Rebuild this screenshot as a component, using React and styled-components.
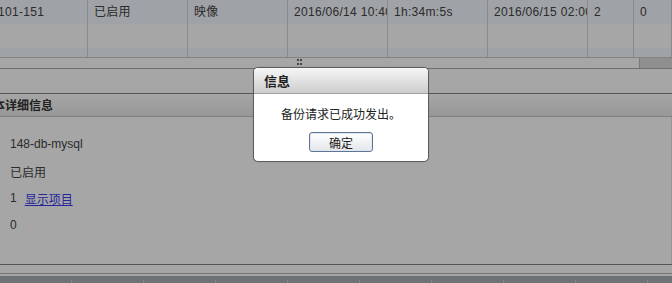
import React from 'react';
import styled, { createGlobalStyle } from 'styled-components';

const GlobalStyle = createGlobalStyle`
    html, body {
        margin: 0;
        padding: 0;
        background: #ffffff;
    }
    body {
        font-family: "Liberation Sans", Arial, "Noto Sans CJK SC", sans-serif;
        font-size: 12px;
        color: #444;
    }
`;

const Page = styled.div`
    position: relative;
    width: 672px;
    height: 283px;
    overflow: hidden;
    display: flex;
    flex-direction: column;
    background: #fff;
`;

// backup job list, scrolled a little to the right
const Grid = styled.div`
    height: 57px;
    overflow: hidden;
    border-bottom: 1px solid #cacaca;
`;

const Row = styled.div`
    display: grid;
    grid-template-columns: 88px 100px 100px 100px 100px 100px 46px 38px;
    height: 24px;
    background: ${p => (p.$alt ? '#ffffff' : '#f5f9ff')};
`;

const Cell = styled.div`
    border-right: 1px solid #d4d4d4;
    padding-left: ${p => (p.$first ? '0' : '6px')};
    text-indent: ${p => (p.$first ? '-2px' : '0')};
    line-height: 24px;
    letter-spacing: 0.3px;
    white-space: nowrap;
    overflow: hidden;
    color: #444;
    font-family: "Liberation Sans", Arial, "Noto Sans CJK SC", sans-serif;
`;

const HScroll = styled.div`
    position: relative;
    height: 10px;
    display: flex;
    background: #dcdcdc;
    border-bottom: 1px solid #aaaaaa;
`;

const Thumb = styled.div`
    width: 639px;
    background: #ffffff;
    border-right: 1px solid #b8b8b8;
`;

const SplitHandle = styled.svg`
    position: absolute;
    left: 297px;
    top: 1px;
`;

const Toolbar = styled.div`
    height: 24px;
    background: #fff;
`;

const DetailHeader = styled.div`
    height: 22px;
    line-height: 22px;
    border-top: 1px solid #838383;
    border-bottom: 1px solid #c4c4c4;
    background: linear-gradient(#ffffff, #e9e9e9);
    font-weight: bold;
    font-size: 12px;
    text-indent: -7px;
    color: #333;
    font-family: "Noto Sans CJK SC", sans-serif;
    white-space: nowrap;
    overflow: hidden;
`;

const DetailBody = styled.div`
    flex: 1;
    padding: 14px 10px 0;
    border-right: 1px solid #e6e6e6;
`;

const DetailLine = styled.div`
    height: 27px;
    line-height: 27px;
    display: flex;
    gap: 8px;
    color: #444;
    font-family: ${p => (p.$cjk ? '"Noto Sans CJK SC", sans-serif' : '"Liberation Sans", Arial, "Noto Sans CJK SC", sans-serif')};
`;

const Link = styled.a`
    color: #3a3af0;
    text-decoration: underline;
    font-family: "Noto Sans CJK SC", sans-serif;
`;

const Footer = styled.div`
    height: 19px;
    display: flex;
    flex-direction: column;
`;

const FooterBar = styled.div`
    height: 8px;
    border-top: 1px solid #838383;
    border-bottom: 1px solid #b5b5b5;
    background: #fff;
`;

const FooterGap = styled.div`
    height: 2px;
    background: #fff;
`;

const HeaderStrip = styled.div`
    flex: 1;
    background: linear-gradient(90deg, transparent 71px, #c9ced3 71px, #c9ced3 72px, transparent 72px) 0 4px / 72px 3px repeat-x, #a8afb6;
`;

const Dim = styled.div`
    position: absolute;
    inset: 0;
    background: rgba(0, 0, 0, 0.35);
`;

const Dialog = styled.div`
    position: absolute;
    left: 253px;
    top: 67px;
    width: 174px;
    height: 93px;
    border: 1px solid #5c5c5c;
    border-radius: 5px;
    background: #fff;
    overflow: hidden;
    display: flex;
    flex-direction: column;
    box-shadow: 0 0 1px rgba(0, 0, 0, 0.3);
`;

const DialogTitle = styled.div`
    height: 25px;
    line-height: 25px;
    padding-left: 10px;
    border-bottom: 1px solid #a0a0a0;
    background: linear-gradient(#f6f6f6, #cdcdcd);
    font-weight: bold;
    font-size: 13px;
    color: #222;
    font-family: "Noto Sans CJK SC", sans-serif;
`;

const DialogBody = styled.div`
    flex: 1;
    display: flex;
    flex-direction: column;
    align-items: center;
    padding-top: 12px;
    gap: 10px;
`;

const Message = styled.div`
    line-height: 16px;
    font-size: 12px;
    color: #222;
    font-family: "Noto Sans CJK SC", sans-serif;
`;

const OkButton = styled.button`
    width: 64px;
    height: 20px;
    padding: 0;
    border: 1px solid #5f7594;
    border-radius: 3px;
    background: linear-gradient(#ffffff, #e4e6ea);
    box-shadow: inset 0 0 0 1px #dfe6f0;
    font-size: 12px;
    color: #222;
    font-family: "Noto Sans CJK SC", sans-serif;
`;

const jobs = [
    ['101-151', '已启用', '映像', '2016/06/14 10:40:12', '1h:34m:5s', '2016/06/15 02:00:00', '2', '0'],
];

const App = () => {
    return (
        <Page>
            <GlobalStyle />
            <Grid>
                {jobs.map((job, i) => (
                    <Row key={i}>
                        {job.map((v, j) => (
                            <Cell key={j} $first={j === 0}>{v}</Cell>
                        ))}
                    </Row>
                ))}
                <Row $alt>
                    {Array.from({ length: 8 }).map((_, j) => <Cell key={j} />)}
                </Row>
                <Row>
                    {Array.from({ length: 8 }).map((_, j) => <Cell key={j} />)}
                </Row>
            </Grid>
            <HScroll>
                <Thumb />
                <SplitHandle width="5" height="6" viewBox="0 0 5 6">
                    <rect x="0" y="0" width="2" height="2" fill="#6a6a6a" />
                    <rect x="3" y="0" width="2" height="2" fill="#6a6a6a" />
                    <rect x="0" y="4" width="2" height="2" fill="#6a6a6a" />
                    <rect x="3" y="4" width="2" height="2" fill="#6a6a6a" />
                </SplitHandle>
            </HScroll>
            <Toolbar />
            <DetailHeader>本详细信息</DetailHeader>
            <DetailBody>
                <DetailLine>148-db-mysql</DetailLine>
                <DetailLine $cjk>已启用</DetailLine>
                <DetailLine>1 <Link href="#">显示项目</Link></DetailLine>
                <DetailLine>0</DetailLine>
            </DetailBody>
            <Footer>
                <FooterBar />
                <FooterGap />
                <HeaderStrip />
            </Footer>
            <Dim />
            <Dialog>
                <DialogTitle>信息</DialogTitle>
                <DialogBody>
                    <Message>备份请求已成功发出。</Message>
                    <OkButton>确定</OkButton>
                </DialogBody>
            </Dialog>
        </Page>
    );
};

export default App;
